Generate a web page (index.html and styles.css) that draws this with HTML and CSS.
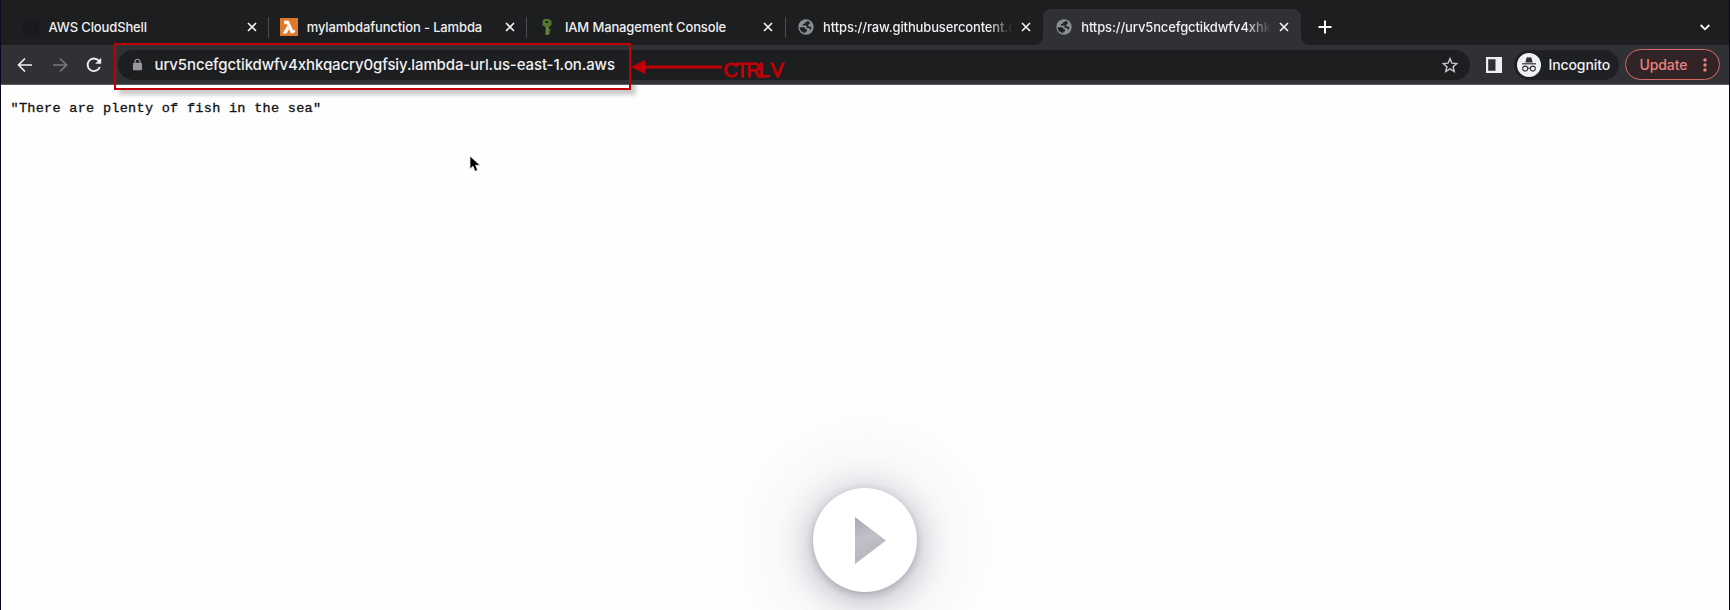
FILE: index.html
```html
<!DOCTYPE html>
<html lang="en">
<head>
<meta charset="utf-8">
<title>Browser window</title>
<link rel="stylesheet" href="styles.css">
</head>
<body>
<svg class="defs" width="0" height="0" aria-hidden="true">
  <symbol id="close" viewBox="0 0 10 10"><path d="M1 1l8 8M9 1L1 9" stroke="#f1f1f2" stroke-width="1.7" fill="none"/></symbol>
  <symbol id="globe" viewBox="0 0 16 16"><circle cx="8" cy="8" r="7.700" fill="#8b8e94"/><path d="M1.600 8.300h3.700c1.600 0 2.200.9 2.200 1.900h1.500v1.500c0 .8-.7 1.100-1.700 1.100v1.300C4 13.700 1.600 11.300 1.600 8.300zM9.800 1.900c-1 .2-1.500.8-1.500 1.500H6.600v1.700H4.900v1.500h3.700v1.600c0 .6.700.9 1.500.9h1.300v1.300h1.400l.7-1.300-1.100-1.500H10.300V5.400l1.500-.8V2.900z" fill="#202124"/></symbol>
</svg>
<div class="window">
  <header class="tabs">
    <div class="tab">
      <svg class="favicon" viewBox="0 0 16 16"><rect width="16" height="16" rx="1" fill="#191a1e"/><path d="M4 5l3 3-3 3M8 11h4" stroke="#202126" fill="none"/></svg>
      <span class="title">AWS CloudShell</span>
      <svg class="close"><use href="#close"/></svg>
    </div>
    <div class="tab">
      <svg class="favicon lambda" viewBox="0 0 18 18"><rect width="18" height="18" fill="#e0782a"/><path d="M4.500 3h4l4.300 9.500 1.500-.5.700 2-3.700 1.300-4.200-9.500H4.500zM7.300 8.200l1.400 2.900L6.500 15.200H3.200z" fill="#fff" stroke="#fff" stroke-width=".7"/></svg>
      <span class="title">mylambdafunction - Lambda</span>
      <svg class="close"><use href="#close"/></svg>
    </div>
    <div class="tab">
      <svg class="favicon" viewBox="0 0 16 16"><path fill-rule="evenodd" d="M5 0h5l2.500 2v4L10 8v1.500l1.500 1v1.500L10 13l1.500 1L9 16H6.500V8L3.500 6.500V2zM6.500 2v2H9V2z" fill="#55752f"/><path d="M8 8v7" stroke="#7c9d48"/></svg>
      <span class="title">IAM Management Console</span>
      <svg class="close"><use href="#close"/></svg>
    </div>
    <div class="tab">
      <svg class="favicon"><use href="#globe"/></svg>
      <span class="title fade">https://raw.githubusercontent.c</span>
      <svg class="close"><use href="#close"/></svg>
    </div>
    <div class="tab active">
      <svg class="favicon"><use href="#globe"/></svg>
      <span class="title fade">https://urv5ncefgctikdwfv4xhk</span>
      <svg class="close"><use href="#close"/></svg>
    </div>
    <svg class="plus" viewBox="0 0 14 14"><path d="M7 .5v13M.5 7h13" stroke="#fff" stroke-width="2"/></svg>
    <svg class="chevron" viewBox="0 0 10 7"><path d="M.7 1L5 5.300 9.300 1" fill="none" stroke="#fff" stroke-width="1.800"/></svg>
  </header>
  <nav class="toolbar">
    <svg class="nav-icon" viewBox="0 0 16 16"><path d="M15 8H2M8 1.500L1.500 8 8 14.500" fill="none" stroke="#eff0f2" stroke-width="1.700"/></svg>
    <svg class="nav-icon" viewBox="0 0 16 16"><path d="M1 8h13M8 1.500L14.500 8 8 14.500" fill="none" stroke="#77797d" stroke-width="1.700"/></svg>
    <svg class="nav-icon" viewBox="0 0 16 16"><path d="M13.800 10A6.300 6.300 0 1 1 12.700 3.700L14 5" fill="none" stroke="#eff0f2" stroke-width="1.900"/><path d="M15.200.8v6H9.200z" fill="#eff0f2"/></svg>
    <div class="omnibox">
      <svg class="lock" viewBox="0 0 10 13"><rect y="4.500" width="10" height="8.500" rx="1" fill="#96989c"/><path d="M2.300 5V3.400a2.700 2.700 0 0 1 5.400 0V5" fill="none" stroke="#96989c" stroke-width="1.300"/></svg>
      <span class="url">urv5ncefgctikdwfv4xhkqacry0gfsiy.lambda-url.us-east-1.on.aws</span>
      <svg class="star" viewBox="0 0 16 16"><path d="M8 1.600l1.900 4.500 4.900.4-3.700 3.200 1.100 4.800L8 11.900l-4.200 2.600 1.100-4.800L1.200 6.500l4.900-.4z" fill="none" stroke="#c5c7ca" stroke-width="1.400"/></svg>
    </div>
    <svg class="panel" viewBox="0 0 16 16"><path fill-rule="evenodd" d="M0 0h16v16H0zM2.200 2.200v11.600h7.300V2.200z" fill="#eeeff3"/></svg>
    <div class="profile">
      <svg class="avatar" viewBox="0 0 24 24"><circle cx="12" cy="12" r="12" fill="#f0f1f5"/><path d="M8.300 9.500l1.300-4.700q.3-.8 1.200-.5l1.200.3 1.200-.3q.9-.3 1.200.5l1.300 4.700z" fill="#303136"/><path d="M5 10.800h14" stroke="#303136" stroke-width="1.200"/><g fill="none" stroke="#303136" stroke-width="1.100"><circle cx="8.200" cy="15.600" r="2.500"/><circle cx="15.800" cy="15.600" r="2.500"/><path d="M10.600 15.400q1.400-.8 2.800 0"/></g></svg>
      <span class="incog">Incognito</span>
    </div>
    <div class="update">
      <span class="upd">Update</span>
      <svg class="dots" viewBox="0 0 4 14"><circle cx="2" cy="2" r="1.700"/><circle cx="2" cy="7" r="1.700"/><circle cx="2" cy="12" r="1.700"/></svg>
    </div>
  </nav>
  <main class="page"><pre class="body-text">"There are plenty of fish in the sea"</pre></main>
  <div class="highlight"></div>
  <svg class="arrow" viewBox="0 0 91 16"><path d="M0 8L14 1v14z" fill="#c00006"/><path d="M12 8h79" stroke="#c00006" stroke-width="3"/></svg>
  <span class="note">CTRL V</span>
  <svg class="pointer" viewBox="0 0 12 18"><path d="M1 1v13l3-2.700 2 5 2.600-1-2-5H11z" fill="#000" stroke="#e9e9e9" stroke-width=".8"/></svg>
  <div class="play"><svg class="triangle" viewBox="0 0 32 47"><defs><linearGradient id="tri" x1="0" y1="0" x2=".3" y2="1"><stop offset="0" stop-color="#aaa9b2"/><stop offset=".5" stop-color="#c2c1ca"/><stop offset="1" stop-color="#b5b4bd"/></linearGradient></defs><path d="M0 0L31 23.500 0 47z" fill="url(#tri)"/></svg></div>
</div>
</body>
</html>
```
FILE: styles.css
```css
* { box-sizing: border-box; }
body { margin: 0; font-family: Inter, "Liberation Sans", sans-serif; background: #fefefe; }
svg { display: block; flex: none; }
.defs { position: absolute; }
.window { position: relative; width: 1730px; height: 610px; overflow: hidden; border: solid #0b0920; border-width: 0 1px; display: flex; flex-direction: column; }
.tabs { height: 45px; flex: none; background: #1d1e20; display: flex; align-items: flex-end; padding-left: 9px; padding-right: 19px; }
.tab { width: 258.2px; height: 36px; flex: none; display: flex; align-items: center; padding: 0 12px 0 13px; position: relative; }
.tab:nth-child(-n+3)::after { content: ""; position: absolute; right: -1px; top: 8px; width: 1px; height: 21px; background: #4c4d50; }
.favicon { width: 16px; height: 16px; }
.favicon.lambda { width: 18px; height: 18px; margin: 0 -1px; }
.title { margin-left: 9.5px; width: 193px; white-space: nowrap; color: #eeeff1; font-size: 13px; font-weight: 500; letter-spacing: -.13px; line-height: 20px; flex: none; }
.fade { width: 193px; -webkit-mask-image: linear-gradient(90deg, #000 165px, transparent 190px); mask-image: linear-gradient(90deg, #000 165px, transparent 190px); }
.close { width: 10px; height: 10px; margin-left: 5px; }
.active { background: #303135; border-radius: 8px 8px 0 0; }
.active::before { content: ""; position: absolute; left: -8px; right: -8px; bottom: 0; height: 8px; background: radial-gradient(circle at 0 0, transparent 7.5px, #303135 8px) left / 8px 8px no-repeat, radial-gradient(circle at 100% 0, transparent 7.5px, #303135 8px) right / 8px 8px no-repeat; }
.plus { width: 14px; height: 14px; margin: 0 0 11px 17px; }
.chevron { width: 10px; height: 7px; margin: 0 0 14px auto; }
.toolbar { height: 40px; flex: none; background: #303135; border-bottom: 1px solid #59595e; display: flex; align-items: center; padding: 0 9px 0 16px; }
.nav-icon { width: 16px; height: 16px; margin-right: 18.5px; }
.omnibox { width: 1352px; height: 30px; border-radius: 15px; background: #1d1e20; display: flex; align-items: center; padding: 0 12px 0 14.5px; margin-left: -2.5px; }
.lock { width: 9px; height: 13px; }
.url { margin-left: 13px; font-size: 15px; font-weight: 500; letter-spacing: -.12px; color: #f0f0f2; }
.star { width: 16px; height: 16px; margin-left: auto; }
.panel { width: 16px; height: 16px; margin-left: 15.5px; }
.profile { width: 105px; height: 30px; border-radius: 15px; background: #1f2023; margin-left: 12px; display: flex; align-items: center; padding-left: 3px; }
.avatar { width: 24px; height: 24px; }
.incog { margin-left: 8px; font-size: 14px; font-weight: 500; letter-spacing: -.1px; color: #f0f0f2; }
.update { width: 95px; height: 31px; margin-left: 6px; border: 1.500px solid #d66b66; border-radius: 16px; background: #302427; display: flex; align-items: center; padding-left: 14px; }
.upd { font-size: 14px; font-weight: 500; letter-spacing: -.1px; color: #ec817a; }
.dots { width: 4px; height: 14px; margin-left: auto; margin-right: 12px; fill: #ec817a; }
.page { flex: 1; background: #fefefe; padding: 15px 9.5px; }
.body-text { margin: 0; font: 13.5px/18px "Liberation Mono", monospace; letter-spacing: .3px; color: #111; -webkit-text-stroke: .3px #111; }
.highlight { position: absolute; left: 113px; top: 43px; width: 517px; height: 47px; border: 2px solid #c00006; box-shadow: 5px 5px 4px 0 rgba(0,0,0,.2); clip-path: polygon(0 0, 100% 0, 100% 42px, 110% 42px, 110% 130%, 0 130%); }
.arrow { position: absolute; left: 629.5px; top: 58.5px; width: 91px; height: 16px; }
.note { position: absolute; left: 722.5px; top: 58px; font: 20px/24px "Liberation Sans", sans-serif; color: #c00006; letter-spacing: -2px; -webkit-text-stroke: .9px #c00006; }
.pointer { position: absolute; left: 468px; top: 155px; width: 12px; height: 18px; }
.play { position: absolute; left: 812px; top: 488px; width: 104px; height: 104px; border-radius: 50%; background: #fff; box-shadow: 0 2px 7px rgba(50,45,75,.22), 0 6px 32px rgba(50,45,75,.34), 0 3px 90px 16px rgba(50,45,75,.11); display: flex; align-items: center; padding-left: 42px; }
.triangle { width: 32px; height: 47px; }
```
